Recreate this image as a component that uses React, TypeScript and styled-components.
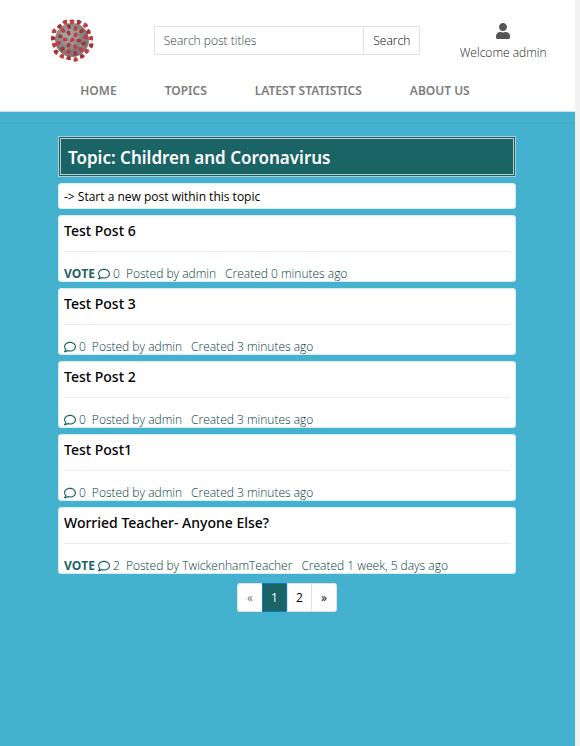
import React from "react";
import styled, { createGlobalStyle, css } from "styled-components";
import { FaRegComment, FaUser } from "react-icons/fa";

const GlobalStyle = createGlobalStyle`
  *, *::before, *::after { box-sizing: border-box; }
  body {
    margin: 0;
    background: #44b1ce;
    color: #212529;
    font: 300 12px/18px "Open Sans", "Noto Sans", sans-serif;
  }
  a { color: inherit; text-decoration: none; }
  input, button { font: inherit; }
`;

const Page = styled.div`
  min-height: 100vh;
  border-right: 5px solid #f1f1f1;
`;

const Header = styled.header`
  background: #fff;
  border-bottom: 1px solid #c9e6ee;
`;

const TopRow = styled.div`
  display: grid;
  grid-template-columns: 1fr 2fr 1fr;
  align-items: center;
  height: 80px;
`;

const LogoLink = styled.a`
  display: flex;
  justify-content: center;
`;

const SearchForm = styled.form`
  display: flex;
  height: 29px;
  margin: 0 11px 0 10px;
`;

const SearchInput = styled.input`
  flex: 1;
  min-width: 0;
  padding: 2px 9px 0;
  border: 1px solid #dee2e6;
  border-radius: 0;
  background: #fff;
  color: #495057;
  &::placeholder { color: #343c44; opacity: 1; }
`;

const SearchButton = styled.button`
  padding: 2px 9px 0;
  border: 1px solid #dee2e6;
  border-left: 0;
  background: #fff;
  color: #000;
`;

const Account = styled.a`
  display: flex;
  flex-direction: column;
  align-items: center;
  gap: 5px;
  padding-top: 4px;
  color: #222;
  white-space: nowrap;
  svg { color: #555; }
`;

const Nav = styled.nav`
  display: flex;
  justify-content: center;
  gap: 48px;
  padding: 2px 25px 11px 0;
  color: #7c7c7c;
  font-family: "Noto Sans", sans-serif;
  font-weight: 600;
`;

const Band = styled.div`
  height: 12px;
  border-bottom: 1px solid #40a8c4;
`;

const Main = styled.main`
  display: flex;
  flex-direction: column;
  gap: 6px;
  margin: 0 59px 0 58px;
  padding-top: 12px;
`;

const TopicTitle = styled.h1`
  margin: 0;
  padding: 7px 7px 4px;
  border: 3px double #b4cccd;
  background: #1a6466;
  color: #fff;
  font-family: "Noto Sans", sans-serif;
  font-size: 17px;
  font-weight: 600;
  line-height: 24px;
`;

const card = css`
  border: 1px solid #d5edf3;
  border-radius: 3px;
  background: #fff;
`;

const NewPost = styled.a`
  ${card}
  display: block;
  padding: 4px 5px 2px;
  color: #000;
  font-weight: 400;
`;

const PostCard = styled.article`
  ${card}
  padding: 4px 5px 0;
`;

const PostTitle = styled.h2`
  margin: 0;
  padding-bottom: 10px;
  border-bottom: 1px solid #ececec;
  color: #000;
  font-family: "Noto Sans", sans-serif;
  font-size: 14px;
  font-weight: 500;
  line-height: 21px;
`;

const Meta = styled.div`
  display: flex;
  align-items: center;
  gap: 3px;
  padding-top: 14px;
  color: #003c3e;
  line-height: 15px;
  svg { color: #1a6466; }
`;

const Vote = styled.a`
  color: #1a6466;
  font-weight: 700;
`;

const MetaText = styled.span<{ $wide?: boolean }>`
  margin-left: ${(p) => (p.$wide ? 6 : 3)}px;
`;

const Pagination = styled.nav`
  display: flex;
  justify-content: center;
  padding-top: 3px;
`;

const PageLink = styled.a<{ $active?: boolean; $muted?: boolean }>`
  width: 25px;
  padding: 5px 0 4px;
  border: 1px solid ${(p) => (p.$active ? "#1474c4" : "#dee2e6")};
  background: ${(p) => (p.$active ? "#1a6466" : "#fff")};
  color: ${(p) => (p.$active ? "#fff" : p.$muted ? "#6c757d" : "#000")};
  font-weight: 400;
  text-align: center;
  &:first-child { border-radius: 3px 0 0 3px; border-right: 0; }
  &:last-child { border-radius: 0 3px 3px 0; border-left: 0; }
`;

const rings = [
  { count: 17, radius: 18, size: 2.7 },
  { count: 12, radius: 12, size: 2.1 },
  { count: 6, radius: 6, size: 1.8 },
  { count: 1, radius: 0, size: 1.8 },
];

function VirusLogo() {
  return (
    <svg width="46" height="46" viewBox="-23 -23 46 46" role="img" aria-label="Coronavirus forum">
      <defs>
        <radialGradient id="virus-body" cx="40%" cy="35%">
          <stop offset="0" stopColor="#a9a9a9" />
          <stop offset="1" stopColor="#7c7c7c" />
        </radialGradient>
      </defs>
      <circle r="17" fill="url(#virus-body)" />
      {rings.map((ring, r) =>
        Array.from({ length: ring.count }, (_, i) => {
          const angle = (i * 360) / ring.count + r * 17;
          const reach = ring.radius + (i % 3) * 0.8;
          return (
            <g key={`${r}-${i}`} transform={`rotate(${angle}) translate(0 ${-reach})`}>
              <path
                d={`M${-ring.size} -1.6Q0 -3.4 ${ring.size} -1.6L1.4 1.8Q0 2.6 -1.4 1.8Z`}
                fill={i % 2 ? "#a3343a" : "#c23b41"}
              />
              {r > 0 && i % 3 === 0 && <circle cx="3" cy="2" r="0.9" fill="#dd9a68" />}
            </g>
          );
        })
      )}
    </svg>
  );
}

const navItems = ["HOME", "TOPICS", "LATEST STATISTICS", "ABOUT US"];

const posts = [
  { title: "Test Post 6", vote: true, comments: 0, author: "admin", age: "0 minutes ago" },
  { title: "Test Post 3", vote: false, comments: 0, author: "admin", age: "3 minutes ago" },
  { title: "Test Post 2", vote: false, comments: 0, author: "admin", age: "3 minutes ago" },
  { title: "Test Post1", vote: false, comments: 0, author: "admin", age: "3 minutes ago" },
  { title: "Worried Teacher- Anyone Else?", vote: true, comments: 2, author: "TwickenhamTeacher", age: "1 week, 5 days ago" },
];

export default function App() {
  return (
    <>
      <GlobalStyle />
      <Page>
        <Header>
          <TopRow>
            <LogoLink href="#"><VirusLogo /></LogoLink>
            <SearchForm role="search">
              <SearchInput type="search" placeholder="Search post titles" aria-label="Search post titles" />
              <SearchButton type="submit">Search</SearchButton>
            </SearchForm>
            <Account href="#">
              <FaUser size={16} />
              <span>Welcome admin</span>
            </Account>
          </TopRow>
          <Nav>
            {navItems.map((item) => <a key={item} href="#">{item}</a>)}
          </Nav>
        </Header>
        <Band />
        <Main>
          <TopicTitle>Topic: Children and Coronavirus</TopicTitle>
          <NewPost href="#">-&gt; Start a new post within this topic</NewPost>
          {posts.map((post) => (
            <PostCard key={post.title}>
              <PostTitle><a href="#">{post.title}</a></PostTitle>
              <Meta>
                {post.vote && <Vote href="#">VOTE</Vote>}
                <FaRegComment size={12} />
                <span>{post.comments}</span>
                <MetaText>Posted by {post.author}</MetaText>
                <MetaText $wide>Created {post.age}</MetaText>
              </Meta>
            </PostCard>
          ))}
          <Pagination aria-label="Pages">
            <PageLink href="#" $muted aria-label="Previous">«</PageLink>
            <PageLink href="#" $active aria-current="page">1</PageLink>
            <PageLink href="#">2</PageLink>
            <PageLink href="#" aria-label="Next">»</PageLink>
          </Pagination>
        </Main>
      </Page>
    </>
  );
}
